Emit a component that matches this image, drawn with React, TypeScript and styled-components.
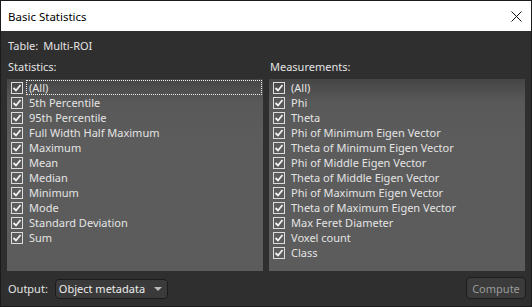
import React from "react";
import styled, { createGlobalStyle } from "styled-components";

const Global = createGlobalStyle`
  html, body { margin: 0; padding: 0; background: #2f2f2f; }
  * { box-sizing: border-box; }
`;

const Window = styled.div`
  width: 532px;
  height: 307px;
  border: 1px solid #1b1b1b;
  background: #2f2f2f;
  display: flex;
  flex-direction: column;
  font-family: "Noto Sans", "Open Sans", sans-serif;
  font-size: 11px;
  color: #e4e4e4;
  overflow: hidden;
`;

const TitleBar = styled.div`
  height: 30px;
  background: #ffffff;
  color: #000;
  display: flex;
  align-items: center;
  justify-content: space-between;
  padding: 0 9px 0 7px;
  font-size: 11.5px;
`;

const Body = styled.div`
  flex: 1;
  padding: 7px 5px 0 6px;
  display: flex;
  flex-direction: column;
`;

const TableLine = styled.div`
  height: 15px;
  line-height: 15px;
  padding-left: 1px;
  display: flex;
  gap: 5px;
`;

const Columns = styled.div`
  margin-top: 6px;
  display: grid;
  grid-template-columns: 256px 256px;
  column-gap: 6px;
`;

const Column = styled.div`
  display: flex;
  flex-direction: column;
`;

const Header = styled.div<{ $indent: number }>`
  height: 15px;
  line-height: 15px;
  padding-left: ${(p) => p.$indent}px;
  margin-bottom: 5px;
`;

const ListBox = styled.div`
  height: 192px;
  background: linear-gradient(#454545 0px, #585858 22px, #5c5c5c 60px, #5c5c5c 100%);
  padding: 1px 1px 0 4px;
  display: flex;
  flex-direction: column;
`;

const Row = styled.div`
  height: 15px;
  display: flex;
  align-items: center;
`;

const Box = styled.span`
  width: 12px;
  height: 12px;
  border: 1px solid #dcdcdc;
  display: flex;
  align-items: center;
  justify-content: center;
  flex: none;
`;

const Label = styled.span<{ $focus?: boolean }>`
  margin-left: 3px;
  padding-left: 2px;
  height: 15px;
  line-height: 13px;
  flex: ${(p) => (p.$focus ? 1 : "none")};
  border: 1px ${(p) => (p.$focus ? "dotted #f0f0f0" : "solid transparent")};
  white-space: nowrap;
`;

const Footer = styled.div`
  margin-top: 7px;
  display: flex;
  align-items: center;
  justify-content: space-between;
  padding-left: 1px;
`;

const OutputGroup = styled.div`
  display: flex;
  align-items: center;
  gap: 7px;
`;

const Dropdown = styled.div`
  width: 113px;
  height: 20px;
  border: 1px solid #1c1c1c;
  border-radius: 4px;
  background: #3a3a3a;
  display: flex;
  align-items: center;
  justify-content: space-between;
  padding: 0 4px 0 3px;
  color: #ececec;
`;

const Arrow = styled.span`
  width: 0;
  height: 0;
  border-left: 4px solid transparent;
  border-right: 4px solid transparent;
  border-top: 4px solid #b8b8b8;
  margin-right: 1px;
`;

const ComputeButton = styled.button`
  width: 60px;
  height: 22px;
  margin-top: -1px;
  border: 1px solid #1c1c1c;
  border-radius: 4px;
  background: #3b3b3b;
  color: #9a9a9a;
  font-family: inherit;
  font-size: 11px;
  padding: 0;
`;

const Check = () => (
  <svg width="10" height="10" viewBox="0 0 10 10">
    <path d="M1.5 5 L4 7.5 L8.5 2" fill="none" stroke="#f2f2f2" strokeWidth="1.8" />
  </svg>
);

const Close = () => (
  <svg width="11" height="11" viewBox="0 0 11 11">
    <path d="M0.5 0.5 L10.5 10.5 M10.5 0.5 L0.5 10.5" stroke="#111" strokeWidth="1" />
  </svg>
);

const stats = [
  "(All)",
  "5th Percentile",
  "95th Percentile",
  "Full Width Half Maximum",
  "Maximum",
  "Mean",
  "Median",
  "Minimum",
  "Mode",
  "Standard Deviation",
  "Sum",
];

const measures = [
  "(All)",
  "Phi",
  "Theta",
  "Phi of Minimum Eigen Vector",
  "Theta of Minimum Eigen Vector",
  "Phi of Middle Eigen Vector",
  "Theta of Middle Eigen Vector",
  "Phi of Maximum Eigen Vector",
  "Theta of Maximum Eigen Vector",
  "Max Feret Diameter",
  "Voxel count",
  "Class",
];

const List = ({ items, focusFirst }: { items: string[]; focusFirst?: boolean }) => (
  <ListBox>
    {items.map((t, i) => (
      <Row key={t}>
        <Box>
          <Check />
        </Box>
        <Label $focus={focusFirst && i === 0}>{t}</Label>
      </Row>
    ))}
  </ListBox>
);

export default function App() {
  return (
    <>
      <Global />
      <Window>
        <TitleBar>
          <span>Basic Statistics</span>
          <Close />
        </TitleBar>
        <Body>
          <TableLine>
            <span>Table:</span>
            <span>Multi-ROI</span>
          </TableLine>
          <Columns>
            <Column>
              <Header $indent={1}>Statistics:</Header>
              <List items={stats} focusFirst />
            </Column>
            <Column>
              <Header $indent={1}>Measurements:</Header>
              <List items={measures} />
            </Column>
          </Columns>
          <Footer>
            <OutputGroup>
              <span>Output:</span>
              <Dropdown>
                <span>Object metadata</span>
                <Arrow />
              </Dropdown>
            </OutputGroup>
            <ComputeButton>Compute</ComputeButton>
          </Footer>
        </Body>
      </Window>
    </>
  );
}
